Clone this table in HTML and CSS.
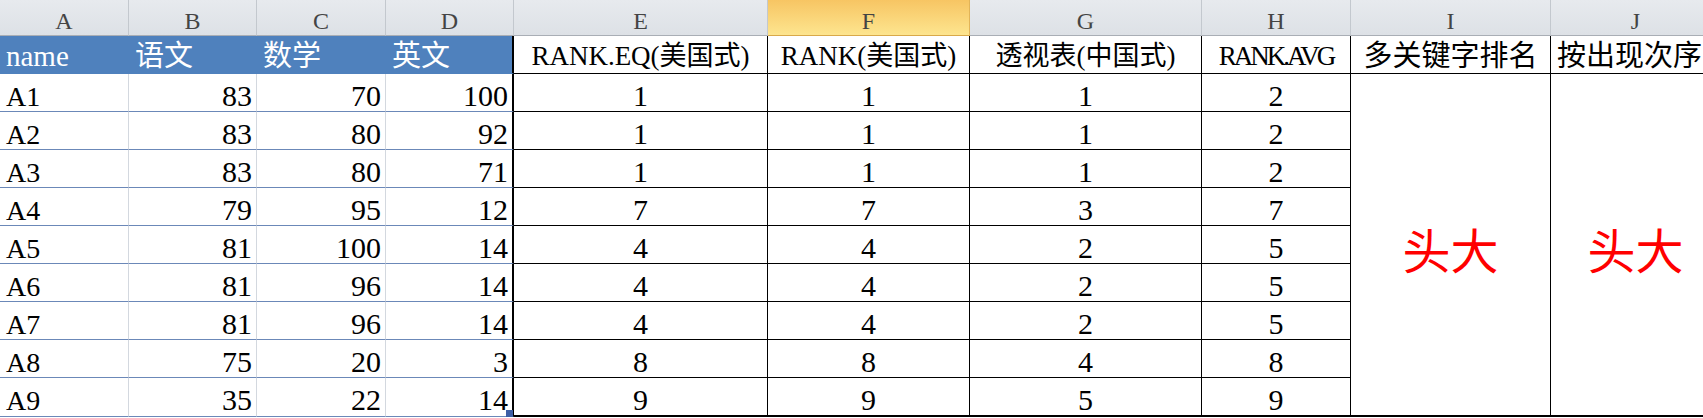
FILE: index.html
```html
<!DOCTYPE html>
<html lang="zh-CN">
<head>
<meta charset="utf-8">
<title>Sheet</title>
<link rel="stylesheet" href="styles.css">
</head>
<body>
<div class="sheet">
  <div class="ch">A</div>
  <div class="ch">B</div>
  <div class="ch">C</div>
  <div class="ch">D</div>
  <div class="ch">E</div>
  <div class="ch active">F</div>
  <div class="ch">G</div>
  <div class="ch">H</div>
  <div class="ch">I</div>
  <div class="ch">J</div>

  <div class="hd">name</div>
  <div class="hd">语文</div>
  <div class="hd">数学</div>
  <div class="hd last">英文</div>
  <div class="th">RANK.EQ(美国式)</div>
  <div class="th">RANK(美国式)</div>
  <div class="th">透视表(中国式)</div>
  <div class="th tight">RANK.AVG</div>
  <div class="th cjk">多关键字排名</div>
  <div class="th cjk left">按出现次序</div>

  <div class="c name">A1</div><div class="c">83</div><div class="c">70</div><div class="c last">100</div>
  <div class="r">1</div><div class="r">1</div><div class="r">1</div><div class="r">2</div>
  <div class="m">头大</div>
  <div class="m">头大</div>

  <div class="c name">A2</div><div class="c">83</div><div class="c">80</div><div class="c last">92</div>
  <div class="r">1</div><div class="r">1</div><div class="r">1</div><div class="r">2</div>

  <div class="c name">A3</div><div class="c">83</div><div class="c">80</div><div class="c last">71</div>
  <div class="r">1</div><div class="r">1</div><div class="r">1</div><div class="r">2</div>

  <div class="c name">A4</div><div class="c">79</div><div class="c">95</div><div class="c last">12</div>
  <div class="r">7</div><div class="r">7</div><div class="r">3</div><div class="r">7</div>

  <div class="c name">A5</div><div class="c">81</div><div class="c">100</div><div class="c last">14</div>
  <div class="r">4</div><div class="r">4</div><div class="r">2</div><div class="r">5</div>

  <div class="c name">A6</div><div class="c">81</div><div class="c">96</div><div class="c last">14</div>
  <div class="r">4</div><div class="r">4</div><div class="r">2</div><div class="r">5</div>

  <div class="c name">A7</div><div class="c">81</div><div class="c">96</div><div class="c last">14</div>
  <div class="r">4</div><div class="r">4</div><div class="r">2</div><div class="r">5</div>

  <div class="c name">A8</div><div class="c">75</div><div class="c">20</div><div class="c last">3</div>
  <div class="r">8</div><div class="r">8</div><div class="r">4</div><div class="r">8</div>

  <div class="c name">A9</div><div class="c">35</div><div class="c">22</div><div class="c last">14<span class="handle"></span></div>
  <div class="r end">9</div><div class="r end">9</div><div class="r end">5</div><div class="r end">9</div>
</div>
</body>
</html>
```

FILE: styles.css
```css
* {
  box-sizing: border-box;
}

html,
body {
  margin: 0;
  padding: 0;
  background: #ffffff;
  overflow: hidden;
}

body {
  width: 1703px;
  height: 418px;
  font-family: "Liberation Serif", "Noto Sans CJK SC", serif;
  color: #000000;
}

.sheet {
  display: grid;
  grid-template-columns: 129px 128px 129px 128px 254px 202px 232px 149px 200px 170px;
  grid-template-rows: 36px 38px repeat(8, 38px) 39px;
  width: 1720px;
}

/* column letters */
.ch {
  background: linear-gradient(#e7eaee, #dde1e6);
  border-right: 1px solid #c3c8ce;
  border-bottom: 1px solid #a9aeb5;
  color: #444444;
  font-size: 24px;
  line-height: 26px;
  padding-top: 8px;
  text-align: center;
}

.ch.active {
  background: linear-gradient(#f7c563, #fde58f);
  border-right-color: #e2b457;
  border-bottom-color: #d9a94a;
}

/* blue table header */
.hd {
  background: #4f81bd;
  color: #ffffff;
  font-size: 29px;
  line-height: 29px;
  padding: 6px 0 0 6px;
  border-right: 1px solid #4f81bd;
  border-bottom: 1px solid #4f81bd;
  white-space: nowrap;
}

.hd.last {
  border-right: 2px solid #000000;
}

/* ranking header cells */
.th {
  border-right: 1px solid #000000;
  border-bottom: 1px solid #000000;
  font-size: 27px;
  line-height: 29px;
  padding-top: 6px;
  text-align: center;
  white-space: nowrap;
  overflow: hidden;
}

.th.cjk {
  font-size: 29px;
}

.th.left {
  text-align: left;
  padding-left: 6px;
}

.th.tight {
  letter-spacing: -3px;
}

/* source data cells */
.c {
  border-right: 1px solid #d3d8df;
  border-bottom: 1px solid #6b88b8;
  font-size: 30px;
  line-height: 29px;
  padding: 7px 4px 0 6px;
  text-align: right;
  white-space: nowrap;
}

.c.name {
  text-align: left;
  font-size: 28px;
  padding-top: 8px;
}

.c.last {
  border-right: 2px solid #000000;
  position: relative;
}

.handle {
  position: absolute;
  right: -1px;
  bottom: -1px;
  width: 7px;
  height: 7px;
  background: #3d5fa6;
}

/* ranking result cells */
.r {
  border-right: 1px solid #000000;
  border-bottom: 1px solid #000000;
  font-size: 30px;
  line-height: 29px;
  padding-top: 7px;
  text-align: center;
}

.r.end {
  border-bottom-width: 2px;
}

/* merged cells */
.m {
  grid-row: span 9;
  border-right: 1px solid #000000;
  border-bottom: 2px solid #000000;
  display: flex;
  align-items: center;
  justify-content: center;
  color: #ff0000;
  font-size: 48px;
  padding-top: 6px;
  white-space: nowrap;
}
```
